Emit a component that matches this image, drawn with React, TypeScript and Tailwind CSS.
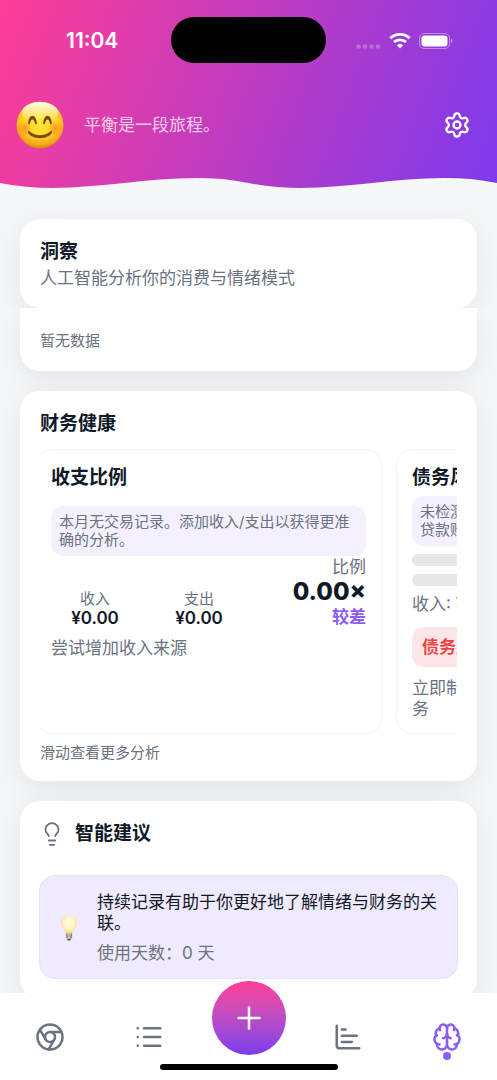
import {
  Brain,
  ChartBar,
  Chromium,
  Lightbulb,
  List,
  Plus,
  Settings,
} from "lucide-react";
import type { LucideIcon } from "lucide-react";

const cardShadow = "shadow-[0_8px_32px_rgba(0,0,0,0.08)]";

function StatusBar() {
  return (
    <div className="grid h-20 grid-cols-[1fr_155px_1fr] items-center">
      <div className="pl-[66px] pt-[2px] font-['Inter'] text-[21px] font-semibold leading-6">11:04</div>
      <div className="h-[46px] rounded-full bg-black" />
      <div className="flex items-center justify-end pr-11 pt-[2px]">
        <svg width="25" height="16" viewBox="0 0 25 16" fill="#fff" fillOpacity="0.25">
          <circle cx="2.5" cy="13.5" r="2.3" />
          <circle cx="9" cy="13.5" r="2.3" />
          <circle cx="15.6" cy="13.5" r="2.3" />
          <circle cx="22" cy="13.5" r="2.3" />
        </svg>
        <svg className="ml-2" width="22" height="16" viewBox="0 0 22 16">
          <g fill="none" stroke="#fff" strokeWidth="2.7">
            <path d="M1.4 5.2C6.6 0.2 15.4 0.2 20.6 5.2" />
            <path d="M5 9.1C8.4 6 13.6 6 17 9.1" />
          </g>
          <path d="M7.8 12.2C9.6 10.6 12.4 10.6 14.2 12.2L11 15.6Z" fill="#fff" />
        </svg>
        <svg className="ml-2" width="34" height="16" viewBox="0 0 34 16">
          <rect x="0.5" y="0.5" width="30" height="15" rx="4.5" fill="none" stroke="#fff" strokeOpacity="0.4" />
          <rect x="2.5" y="2.5" width="26" height="11" rx="3" fill="#fff" />
          <path d="M32 5.6C33.8 6.4 33.8 9.4 32 10.2Z" fill="#fff" fillOpacity="0.5" />
        </svg>
      </div>
    </div>
  );
}

function SmileFace() {
  return (
    <svg width="48" height="48" viewBox="0 0 48 48" role="img" aria-label="😊">
      <defs>
        <radialGradient id="face" cx="0.5" cy="0.38" r="0.66">
          <stop offset="0" stopColor="#ffe838" />
          <stop offset="0.5" stopColor="#fed82e" />
          <stop offset="0.8" stopColor="#f6ab1c" />
          <stop offset="1" stopColor="#c87c08" />
        </radialGradient>
        <linearGradient id="shine" x1="0" y1="0" x2="0" y2="1">
          <stop offset="0" stopColor="#fff" stopOpacity="0.9" />
          <stop offset="1" stopColor="#fff" stopOpacity="0" />
        </linearGradient>
        <radialGradient id="blush">
          <stop offset="0" stopColor="#ff7a16" stopOpacity="0.7" />
          <stop offset="1" stopColor="#ff8a16" stopOpacity="0" />
        </radialGradient>
      </defs>
      <circle cx="24" cy="24" r="23.5" fill="url(#face)" />
      <ellipse cx="24" cy="11" rx="18" ry="10" fill="url(#shine)" />
      <circle cx="9" cy="27" r="8" fill="url(#blush)" />
      <circle cx="39" cy="27" r="8" fill="url(#blush)" />
      <g fill="#7b4a08">
        <path d="M12.2 22.2C12.6 17.6 14.2 14.8 16.5 14.8C18.8 14.8 20.4 17.6 20.8 22.2C20.9 23.6 19.4 23.6 19 22.4C18.4 20.2 17.8 18.4 16.5 18.4C15.2 18.4 14.6 20.2 14 22.4C13.6 23.6 12.1 23.6 12.2 22.2Z" />
        <path d="M27.2 22.2C27.6 17.6 29.2 14.8 31.5 14.8C33.8 14.8 35.4 17.6 35.8 22.2C35.9 23.6 34.4 23.6 34 22.4C33.4 20.2 32.8 18.4 31.5 18.4C30.2 18.4 29.6 20.2 29 22.4C28.6 23.6 27.1 23.6 27.2 22.2Z" />
        <path d="M11.8 31C11.5 30 12.5 29.5 13.3 30.3C19.5 35.6 28.5 35.6 34.7 30.3C35.5 29.5 36.5 30 36.2 31C33 39.2 15 39.2 11.8 31Z" />
      </g>
    </svg>
  );
}

function BulbEmoji() {
  return (
    <svg width="18" height="26" viewBox="0 0 18 26" role="img" aria-label="💡">
      <defs>
        <radialGradient id="glow" cx="0.5" cy="0.4" r="0.6">
          <stop offset="0" stopColor="#fffdf0" />
          <stop offset="0.6" stopColor="#fff3bd" />
          <stop offset="1" stopColor="#f2cf78" />
        </radialGradient>
        <linearGradient id="base" x1="0" y1="0" x2="1" y2="0">
          <stop offset="0" stopColor="#8b8983" />
          <stop offset="0.5" stopColor="#d5d3ca" />
          <stop offset="1" stopColor="#77756f" />
        </linearGradient>
      </defs>
      <path d="M9 0.5C4.2 0.5 1.2 4 1.2 8.2C1.2 12.8 5.3 14.6 5.8 19H12.2C12.7 14.6 16.8 12.8 16.8 8.2C16.8 4 13.8 0.5 9 0.5Z" fill="url(#glow)" />
      <path d="M5.9 18.5H12.1V22.5L11 24H7L5.9 22.5Z" fill="url(#base)" />
      <path d="M6 21H12" stroke="#85837c" strokeWidth="0.6" />
      <path d="M7 24H11L10 25.5H8Z" fill="#4b4a47" />
    </svg>
  );
}

function Header() {
  return (
    <header className="relative h-[188px] bg-[linear-gradient(111deg,#ff3d96,#7c3aed)] text-white">
      <StatusBar />
      <div className="flex h-[90px] items-center pl-4 pr-[26px]">
        <SmileFace />
        <p className="ml-5 flex-1 text-[17px] leading-6 text-white/75">平衡是一段旅程。</p>
        <button aria-label="设置" className="block">
          <Settings size={28} strokeWidth={2} />
        </button>
      </div>
      <svg
        className="absolute inset-x-0 bottom-0 h-[12px] w-full"
        viewBox="0 0 497 12"
        preserveAspectRatio="none"
        fill="#f5f7fb"
      >
        <path d="M0 7C83 24 166 -10 248.5 7C331 24 414 -10 497 7V12H0Z" />
      </svg>
    </header>
  );
}

function RatioCard() {
  return (
    <article className="-ml-1 w-[346px] shrink-0 rounded-2xl border border-gray-100 pl-[14px] pr-[15px] pt-[15px]">
      <h3 className="text-[19px] font-bold leading-[26px]">收支比例</h3>
      <p className="mt-[15px] rounded-xl bg-[#f4f0fe] px-2 py-[7px] text-[15px] leading-[18px] text-[#6b7280]">
        本月无交易记录。添加收入/支出以获得更准确的分析。
      </p>
      <div className="flex items-end">
        <dl className="w-[88px] text-center">
          <dt className="text-[15px] leading-[18px] text-[#6b7280]">收入</dt>
          <dd className="font-['Inter'] text-[17px] font-semibold leading-5">¥0.00</dd>
        </dl>
        <dl className="ml-4 w-[88px] text-center">
          <dt className="text-[15px] leading-[18px] text-[#6b7280]">支出</dt>
          <dd className="font-['Inter'] text-[17px] font-semibold leading-5">¥0.00</dd>
        </dl>
        <div className="ml-auto text-right">
          <p className="text-[17px] leading-[22px] text-[#6b7280]">比例</p>
          <p className="font-['Inter'] text-[24px] font-extrabold leading-7">0.00×</p>
          <p className="text-[17px] font-bold leading-[22px] text-[#8b5cf6]">较差</p>
        </div>
      </div>
      <p className="mt-2 text-[17px] leading-6 text-[#6b7280]">尝试增加收入来源</p>
    </article>
  );
}

function DebtCard() {
  return (
    <article className="w-[346px] shrink-0 rounded-2xl border border-gray-100 px-[15px] pb-[13px] pt-[15px]">
      <h3 className="text-[19px] font-bold leading-[26px]">债务风险</h3>
      <p className="mt-[5px] rounded-xl bg-[#f4f0fe] px-2 py-[7px] text-[15px] leading-[18px] text-[#6b7280]">
        未检测到债务记录。请添加<br />贷款账户以获得分析。
      </p>
      <div className="mt-2 h-3 rounded-full bg-gray-200" />
      <div className="mt-2 h-3 rounded-full bg-gray-200" />
      <p className="mt-[6px] text-[17px] leading-6 text-[#6b7280]">收入: ¥0.00</p>
      <p className="mt-[11px] rounded-xl bg-[#fde6e7] px-[10px] py-2 text-[17px] font-bold leading-6 text-[#ef4444]">
        债务风险较高
      </p>
      <p className="mt-[11px] text-[17px] leading-[21px] text-[#6b7280]">
        立即制定计划，优先偿还高息债<br />务
      </p>
    </article>
  );
}

function NavItem({ icon: Icon, label, active }: { icon: LucideIcon; label: string; active?: boolean }) {
  return (
    <a
      href="#"
      aria-label={label}
      className={`relative flex flex-1 justify-center pt-[29px] ${active ? "text-[#8b5cf6]" : "text-[#6b7280]"}`}
    >
      <Icon size={30} strokeWidth={2} />
      {active && <span className="absolute top-[59px] size-2 rounded-full bg-[#8b5cf6]" />}
    </a>
  );
}

function TabBar() {
  return (
    <nav className="fixed inset-x-0 bottom-0 flex h-[87px] bg-white">
      <NavItem icon={Chromium} label="首页" />
      <NavItem icon={List} label="记录" />
      <div className="flex flex-1 justify-center">
        <button
          aria-label="添加"
          className="-mt-3 flex size-[74px] shrink-0 items-center justify-center rounded-full bg-linear-to-b from-[#ff3d96] to-[#7c3aed] text-white"
        >
          <Plus size={36} strokeWidth={1.7} />
        </button>
      </div>
      <NavItem icon={ChartBar} label="统计" />
      <NavItem icon={Brain} label="洞察" active />
      <span className="absolute bottom-[10px] left-1/2 h-[6px] w-[178px] -translate-x-1/2 rounded-full bg-black" />
    </nav>
  );
}

export default function App() {
  return (
    <div className="h-screen overflow-x-hidden overflow-y-auto bg-[#f5f7fb] font-['Inter','Noto_Sans_CJK_SC',sans-serif] text-[#111827] [scrollbar-width:none]">
      <Header />
      <main className="flex flex-col gap-5 px-5 pb-24">
        <section>
          <div className="-mx-5 overflow-hidden px-5 pt-[31px]">
            <div className={`h-[89px] rounded-[20px] bg-white px-5 pt-5 ${cardShadow}`}>
              <h1 className="text-[19px] font-bold leading-[26px]">洞察</h1>
              <p className="text-[17px] leading-[26px] text-[#6b7280]">人工智能分析你的消费与情绪模式</p>
            </div>
          </div>
          <div className="-mx-5 -mb-5 overflow-hidden px-5 pb-5">
            <div className={`rounded-b-[20px] bg-white px-5 pb-5 pt-[23px] ${cardShadow}`}>
              <p className="text-[15px] leading-5 text-[#6b7280]">暂无数据</p>
            </div>
          </div>
        </section>

        <section className={`rounded-[20px] bg-white px-5 pb-[18px] pt-5 ${cardShadow}`}>
          <h2 className="text-[19px] font-semibold leading-[26px]">财务健康</h2>
          <div className="mt-3 flex gap-[14px] overflow-x-auto [scrollbar-width:none]">
            <RatioCard />
            <DebtCard />
          </div>
          <p className="mt-[9px] text-[15px] leading-5 text-[#6b7280]">滑动查看更多分析</p>
        </section>

        <section className={`rounded-[20px] bg-white px-[19px] pb-5 pt-5 ${cardShadow}`}>
          <h2 className="flex items-center gap-[10px] text-[19px] font-semibold leading-[26px]">
            <Lightbulb size={26} strokeWidth={1.7} className="text-[#6b7280]" />
            智能建议
          </h2>
          <div className="mt-7 flex items-center rounded-2xl border border-[#e7e0fb] bg-[#efeafe] pb-[14px] pr-4 pt-4">
            <span className="flex w-[57px] justify-center">
              <BulbEmoji />
            </span>
            <div className="flex-1">
              <p className="text-[17px] leading-[21px]">持续记录有助于你更好地了解情绪与财务的关联。</p>
              <p className="mt-2 text-[17px] leading-[22px] text-[#6b7280]">使用天数：0 天</p>
            </div>
          </div>
        </section>
      </main>
      <TabBar />
    </div>
  );
}
